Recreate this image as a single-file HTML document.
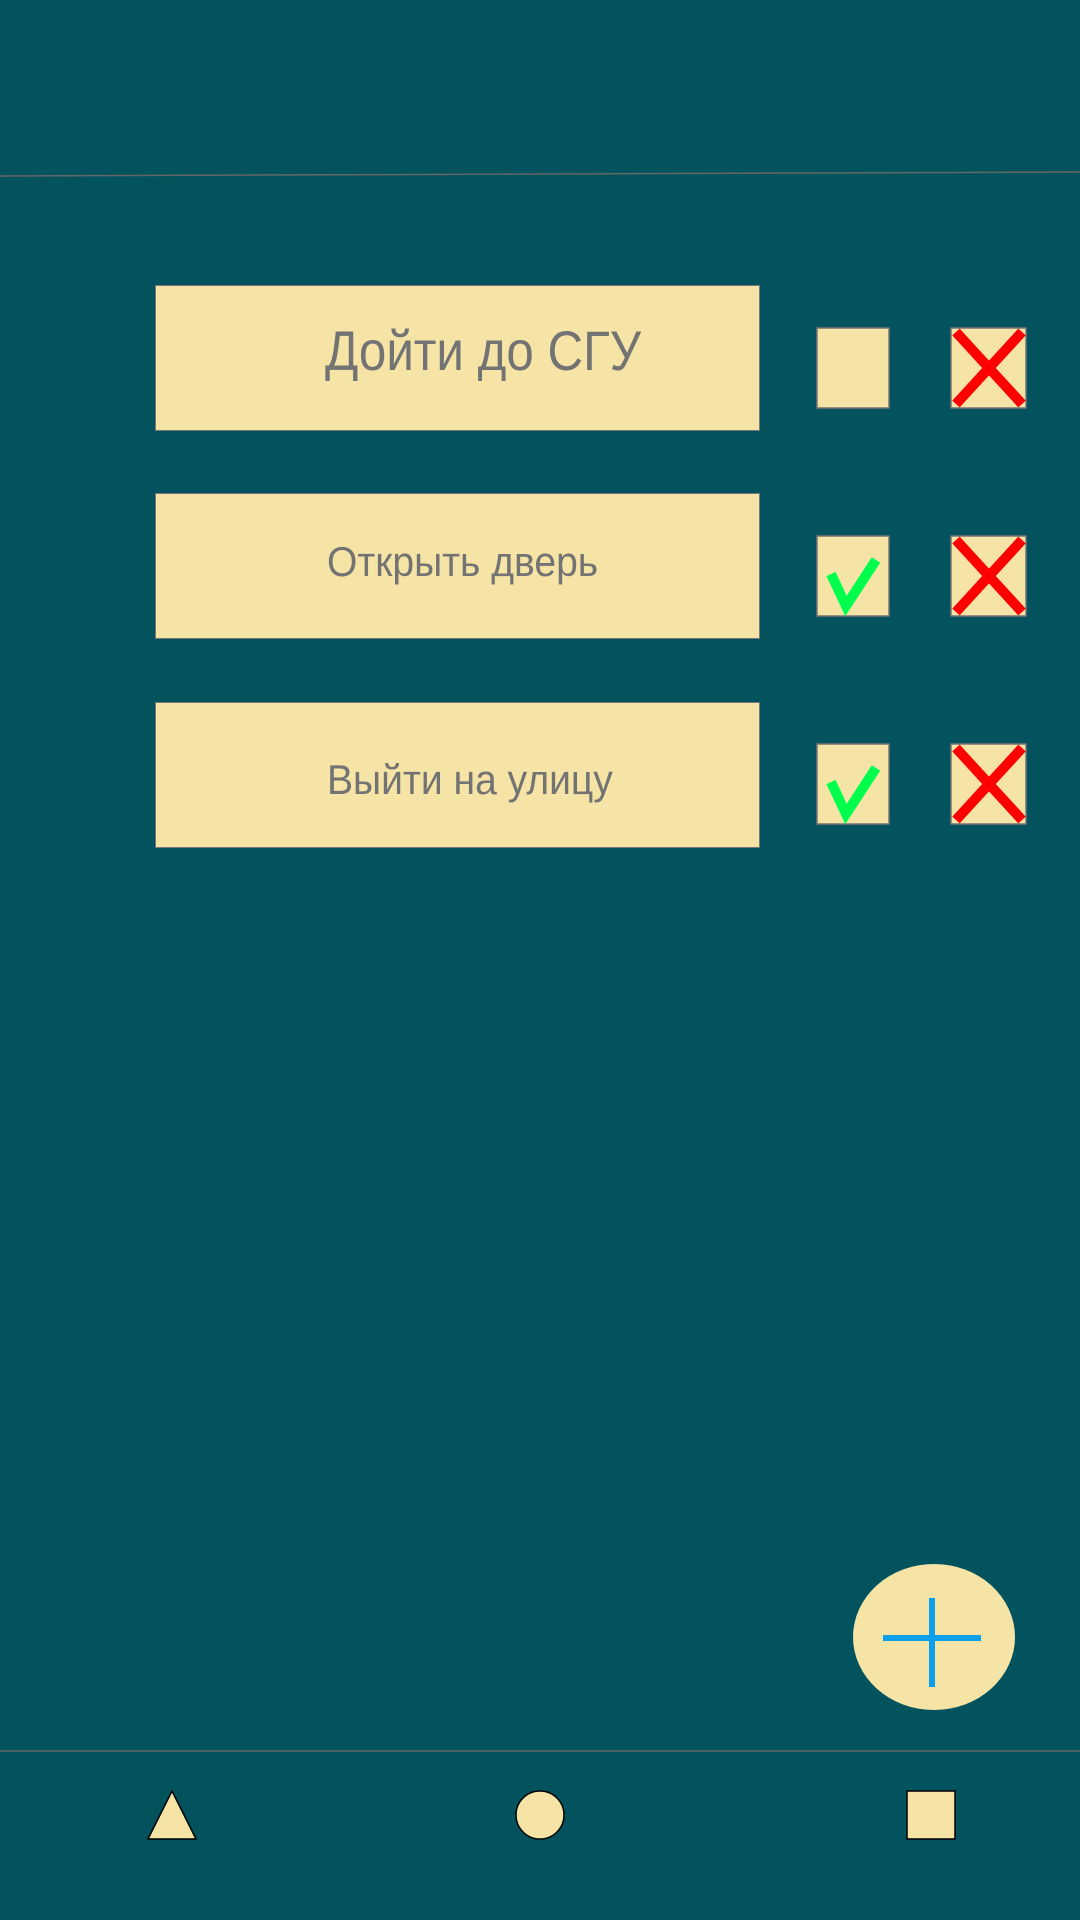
<!DOCTYPE html>
<html><head><meta charset="utf-8"><style>
html,body{margin:0;padding:0}
body{width:1080px;height:1920px;background:#02535E;position:relative;overflow:hidden;font-family:"Liberation Sans",sans-serif}
.card{position:absolute;left:155px;width:605px;height:146px;background:#F5E4A6;border:1px solid #777;box-sizing:border-box}
.t{position:absolute;color:#737373;white-space:nowrap;transform-origin:0 0}
</style></head><body>
<svg width="1080" height="1920" style="position:absolute;left:0;top:0">
<line x1="0" y1="176" x2="1080" y2="172" stroke="#666" stroke-width="1.5"/>
<line x1="0" y1="1751" x2="1080" y2="1751" stroke="#666" stroke-width="1.5"/>
</svg>
<div class="card" style="top:285px"></div>
<div class="card" style="top:493px"></div>
<div class="card" style="top:702px"></div>
<div class="t" style="left:325px;top:318px;font-size:56px;transform:scaleX(0.88)">Дойти до СГУ</div>
<div class="t" style="left:327px;top:538px;font-size:42px;transform:scaleX(0.93)">Открыть дверь</div>
<div class="t" style="left:327px;top:756px;font-size:42px;transform:scaleX(0.93)">Выйти на улицу</div>
<svg width="1080" height="1920" style="position:absolute;left:0;top:0">
<g fill="#F5E4A6" stroke="#777" stroke-width="1.5">
<rect x="817" y="328" width="72" height="80"/><rect x="951" y="328" width="75" height="80"/>
<rect x="817" y="536" width="72" height="80"/><rect x="951" y="536" width="75" height="80"/>
<rect x="817" y="744" width="72" height="80"/><rect x="951" y="744" width="75" height="80"/>
</g>
<g stroke="#FF0000" stroke-width="10">
<path d="M956 332 L1022 404 M1022 332 L956 404"/>
<path d="M956 540 L1022 612 M1022 540 L956 612"/>
<path d="M956 748 L1022 820 M1022 748 L956 820"/>
</g>
<g stroke="#00FF4C" stroke-width="10" fill="none">
<path d="M831 574 L846 606 L876 560"/>
<path d="M831 782 L846 814 L876 768"/>
</g>
<ellipse cx="934" cy="1637" rx="81" ry="73" fill="#F5E4A6"/>
<g stroke="#0AA0EC" stroke-width="6"><line x1="883" y1="1638" x2="981" y2="1638"/><line x1="932" y1="1598" x2="932" y2="1687"/></g>
<g fill="#F5E4A6" stroke="#000" stroke-width="1.5">
<polygon points="172,1791 196,1839 148,1839"/>
<circle cx="540" cy="1815" r="24"/>
<rect x="907" y="1791" width="48" height="48"/>
</g>
</svg>
</body></html>
